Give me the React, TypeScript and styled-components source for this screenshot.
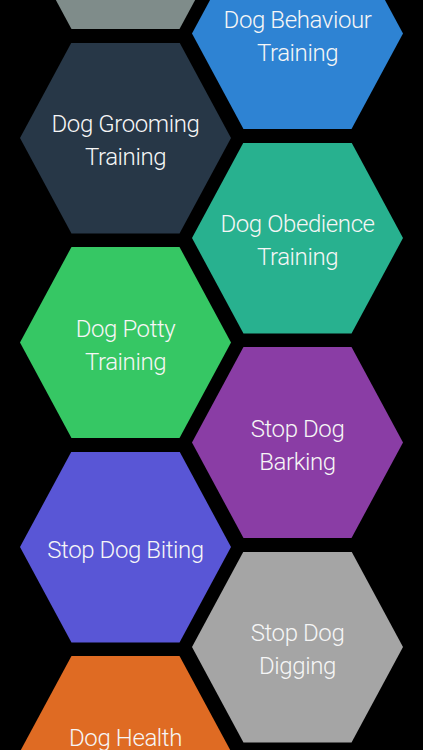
import React from 'react';
import styled, {createGlobalStyle} from "styled-components";

const GlobalStyle = createGlobalStyle`
    html, body {
        margin: 0;
        padding: 0;
        background: #000;
    }
    * {
        box-sizing: border-box;
    }
`

type Item = { title: string[]; color: string }

// the top hex is cut by the screen edge, its label is not visible
const leftItems: Item[] = [
    {title: [], color: "#7f8c8a"},
    {title: ["Dog Grooming", "Training"], color: "#273747"},
    {title: ["Dog Potty", "Training"], color: "#36c764"},
    {title: ["Stop Dog Biting"], color: "#5956d6"},
    {title: ["Dog Health", "Tips"], color: "#df6b23"},
]

const rightItems: Item[] = [
    {title: ["Dog Behaviour", "Training"], color: "#2e83d3"},
    {title: ["Dog Obedience", "Training"], color: "#28b18f"},
    {title: ["Stop Dog", "Barking"], color: "#8a3da5"},
    {title: ["Stop Dog", "Digging"], color: "#a5a5a5"},
]

export default function App() {
    return (
        <>
            <GlobalStyle/>
            <Screen>
                <Honeycomb>
                    <Column offset={-162}>
                        {leftItems.map((item, i) => (
                            <Hex key={i} color={item.color}>
                                <HexLabel>
                                    {item.title.map((line) => <span key={line}>{line}</span>)}
                                </HexLabel>
                            </Hex>
                        ))}
                    </Column>
                    <Column offset={-62} shift={-39}>
                        {rightItems.map((item, i) => (
                            <Hex key={i} color={item.color}>
                                <HexLabel>
                                    {item.title.map((line) => <span key={line}>{line}</span>)}
                                </HexLabel>
                            </Hex>
                        ))}
                    </Column>
                </Honeycomb>
            </Screen>
        </>
    );
}

const Screen = styled.div`
    width: 423px;
    height: 750px;
    overflow: hidden;
    background: #000;
`
const Honeycomb = styled.div`
    display: flex;
    align-items: flex-start;
    padding-left: 20px;
`
const Column = styled.div<{ offset: number; shift?: number }>`
    display: flex;
    flex-direction: column;
    gap: 13.5px;
    margin-top: ${({offset}) => offset}px;
    margin-left: ${({shift}) => shift ?? 0}px;
`
const Hex = styled.div<{ color: string }>`
    width: 211px;
    height: 191px;
    flex-shrink: 0;
    display: flex;
    align-items: center;
    justify-content: center;
    background: ${({color}) => color};
    clip-path: polygon(0 50%, 24.4% 0, 75.6% 0, 100% 50%, 75.6% 100%, 24.4% 100%);
`
const HexLabel = styled.div`
    display: flex;
    flex-direction: column;
    align-items: center;
    padding-top: 6px;
    font-family: Roboto, "Liberation Sans", sans-serif;
    font-weight: 300;
    font-size: 24px;
    line-height: 33px;
    letter-spacing: -0.4px;
    color: #f6f6f6;
    text-align: center;
`
